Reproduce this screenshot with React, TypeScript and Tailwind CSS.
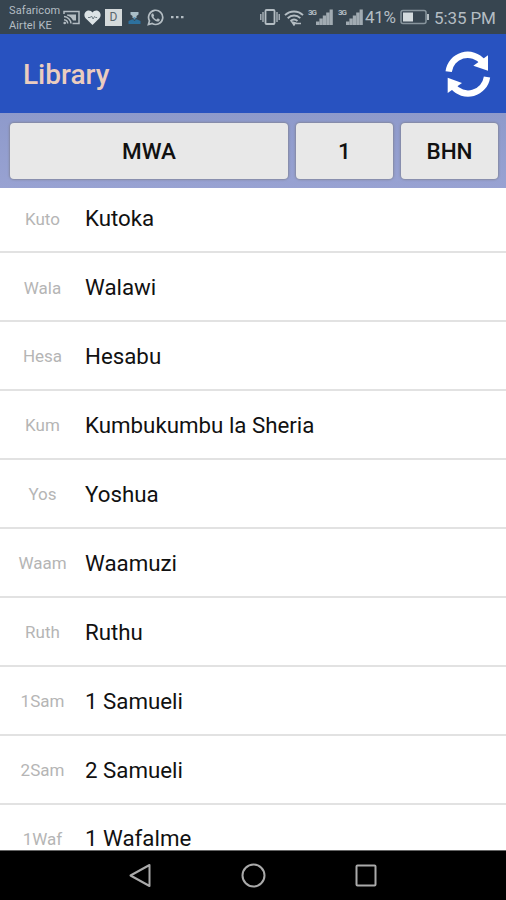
import React from 'react';

interface Book {
  abbr: string;
  name: string;
}

const books: Book[] = [
  { abbr: 'Kuto', name: 'Kutoka' },
  { abbr: 'Wala', name: 'Walawi' },
  { abbr: 'Hesa', name: 'Hesabu' },
  { abbr: 'Kum', name: 'Kumbukumbu la Sheria' },
  { abbr: 'Yos', name: 'Yoshua' },
  { abbr: 'Waam', name: 'Waamuzi' },
  { abbr: 'Ruth', name: 'Ruthu' },
  { abbr: '1Sam', name: '1 Samueli' },
  { abbr: '2Sam', name: '2 Samueli' },
  { abbr: '1Waf', name: '1 Wafalme' },
];

const Signal = () => (
  <div className="flex h-[18px] w-[25px] shrink-0">
    <span className="w-2 text-[8px] leading-[9px] font-bold tracking-[-1px]">3G</span>
    <svg className="h-[18px] w-[17px]" viewBox="0 0 17 18" fill="currentColor">
      <path opacity="0.85" d="M0 17v-3.500h3.200V17zM3.400 17v-6.500h3.200V17zM6.800 17V7.500h3.200V17zM10.200 17V4.500h3.200V17zM13.600 17V1.500h3.200V17z" />
    </svg>
  </div>
);

const StatusBar = () => (
  <div className="flex h-[34px] shrink-0 items-center bg-[#374550] text-[#b4bdc3]">
    <div className="mt-0.5 ml-[9px] w-[54px] text-[11px] leading-[15px] tracking-[0.1px] whitespace-nowrap">
      <p>Safaricom</p>
      <p>Airtel KE</p>
    </div>

    {/* notifications */}
    <svg className="h-[15px] w-[17px]" viewBox="0 0 17 15" fill="none" stroke="currentColor" strokeWidth="1.5">
      <path d="M1 4V1.500h15v12H9.500" />
      <path d="M1 6.500a7.500 7.500 0 0 1 7 7M1 9.700a4 4 0 0 1 3.700 3.800" />
      <path d="M4 4.500h9v6h-3a9 9 0 0 0-6-5z" fill="currentColor" stroke="none" />
      <circle cx="1.700" cy="13" r="1.300" fill="currentColor" stroke="none" />
    </svg>
    <svg className="ml-1 h-[15px] w-[17px]" viewBox="0 0 17 15">
      <path d="M8.500 15 1.600 8.300C-.6 5.900.3 1.900 3.200.8 5.300 0 7.400.8 8.500 2.500 9.600.8 11.700 0 13.800.8c2.900 1.100 3.800 5.100 1.600 7.500z" fill="#dce3e6" />
      <path d="M4 7.500h2.300l1.200-1.500 1.600 3 1.500-2.500 1 1h1.500" fill="none" stroke="#6d7b83" strokeWidth="1" />
    </svg>
    <div className="ml-1 flex h-[17px] w-[17px] items-center justify-center bg-[#d5dadb] text-[12px] leading-none text-[#59666c]">
      D
    </div>
    <svg className="ml-1.5 h-[15px] w-[13px]" viewBox="0 0 13 15">
      <path d="M2.500 2h8v2.500L8.500 6v2h-4V6l-2-1.500z" fill="#a9bec8" />
      <path d="M5.500 7h2v2.500h-2z" fill="#5793b8" />
      <path d="M.5 14v-3l4-1.800L6.500 11l2-1.800 4 1.800v3z" fill="#2d719e" />
    </svg>
    <svg className="ml-[6px] h-[17px] w-[17px]" viewBox="0 0 24 24" fill="currentColor">
      <path d="M17.472 14.382c-.297-.149-1.758-.867-2.030-.967-.273-.099-.471-.148-.67.150-.197.297-.767.966-.940 1.164-.173.199-.347.223-.644.075-.297-.150-1.255-.463-2.390-1.475-.883-.788-1.480-1.761-1.653-2.059-.173-.297-.018-.458.130-.606.134-.133.298-.347.446-.520.149-.174.198-.298.298-.497.099-.198.050-.371-.025-.520-.075-.149-.669-1.612-.916-2.207-.242-.579-.487-.500-.669-.510-.173-.008-.371-.010-.570-.010-.198 0-.520.074-.792.372-.272.297-1.040 1.016-1.040 2.479 0 1.462 1.065 2.875 1.213 3.074.149.198 2.096 3.200 5.077 4.487 2.100.9 2.900.8 3.500.700.900-.1 1.758-.719 2.006-1.413.248-.694.248-1.289.173-1.413-.074-.124-.272-.198-.570-.347z" />
      <path d="M2 22l1.500-5.300A10 10 0 1 1 7.300 20.500z" fill="none" stroke="currentColor" strokeWidth="2.400" />
    </svg>
    <svg className="ml-[6px] h-[4px] w-[15px]" viewBox="0 0 15 4" fill="currentColor">
      <path d="M1 1h2.500v2.200H1zM6 1h2.500v2.200H6zM11 1h2.500v2.200H11z" />
    </svg>

    {/* device state */}
    <svg className="ml-auto h-[18px] w-5" viewBox="0 0 20 18" fill="none" stroke="currentColor">
      <rect x="5.500" y="2" width="9" height="14" rx="1" strokeWidth="1.800" />
      <path d="M3 4v10M.8 6v6M17 4v10M19.200 6v6" strokeWidth="1.300" />
    </svg>
    <svg className="ml-1 h-[17px] w-5" viewBox="0 0 20 17" fill="none" stroke="currentColor" strokeWidth="1.900">
      <path d="M1 6.200c5-5 13-5 18 0M3.700 9.200c3.700-3.600 9-3.600 12.600 0M6.500 12c2.200-2 4.800-2 7 0" />
      <path d="m8 13 2 3 1.500-2zM12 14.500h5" strokeWidth="1.500" />
    </svg>
    <div className="ml-1 flex gap-[5px]">
      <Signal />
      <Signal />
    </div>
    <span className="ml-[2px] w-[33px] text-[17px] leading-5 tracking-[-0.3px]">41%</span>
    <svg className="ml-[2px] h-4 w-[30px]" viewBox="0 0 30 16">
      <rect x="1" y="1.500" width="25" height="13" rx="2" fill="none" stroke="#88959d" strokeWidth="1.500" />
      <rect x="3" y="3.500" width="10" height="9" fill="#d3dadd" />
      <path d="M27 5h2v6h-2z" fill="currentColor" />
    </svg>
    <span className="mt-px mr-[10px] ml-1 w-[62px] text-[17px] leading-5 tracking-[-0.1px] whitespace-nowrap">5:35 PM</span>
  </div>
);

const Header = () => (
  <header className="flex h-[79px] shrink-0 items-center justify-between bg-[#2852c0] pr-[15px] pl-[23px]">
    <h1 className="pt-[3px] text-[28px] font-medium text-[#ebcdbf]">Library</h1>
    <button aria-label="Refresh">
      <svg className="h-[46px] w-[46px]" viewBox="45 46 138 138">
        <path d="M56 108A57.500 57.500 0 0 1 158 79" fill="none" stroke="white" strokeWidth="19" />
        <path d="M174 59v46l-44-15z" fill="white" />
        <path d="M171 124A57.500 57.500 0 0 1 69 152" fill="none" stroke="white" strokeWidth="19" />
        <path d="M53 172v-46l43 16z" fill="white" />
      </svg>
    </button>
  </header>
);

const pickerClass =
  'h-14 rounded-[4px] bg-[#e8e8e8] pt-0.5 text-[22.5px] font-medium text-[#111] shadow-[0_0_2px_1px_rgba(120,122,130,0.6)]';

const Picker = () => (
  <div className="flex h-[75px] shrink-0 items-center gap-2 bg-linear-to-b from-[#8e9acb] to-[#98a2d2] pr-2 pl-[10px]">
    <button className={`${pickerClass} flex-1`}>MWA</button>
    <button className={`${pickerClass} w-[97px]`}>1</button>
    <button className={`${pickerClass} w-[97px]`}>BHN</button>
  </div>
);

const BookList = () => (
  <ul className="-mt-[3.5px] flex flex-col">
    {books.map((book) => (
      <li key={book.abbr} className="flex h-[68.9px] shrink-0 items-center border-b-2 border-[#e2e2e2] bg-white">
        <span className="w-[85px] pt-[3px] text-center text-[17px] text-[#b5b5b5]">{book.abbr}</span>
        <span className="pt-[2.5px] text-[22.3px] text-[#111]">{book.name}</span>
      </li>
    ))}
  </ul>
);

const NavBar = () => (
  <nav className="flex h-[50px] shrink-0 items-center justify-center gap-[87px] border-t border-[#666] bg-black text-[#aaa]">
    <svg className="h-[26px] w-[26px]" viewBox="0 0 26 26" fill="none" stroke="currentColor" strokeWidth="2" strokeLinejoin="round">
      <path d="M22.500 2v21L3.500 12.500z" />
    </svg>
    <svg className="h-[26px] w-[26px]" viewBox="0 0 26 26" fill="none" stroke="currentColor" strokeWidth="2">
      <circle cx="13.500" cy="12.500" r="11" />
    </svg>
    <svg className="h-[26px] w-[26px]" viewBox="0 0 26 26" fill="none" stroke="currentColor" strokeWidth="2">
      <rect x="3.500" y="2.500" width="19" height="20" rx="1" />
    </svg>
  </nav>
);

const App: React.FC = () => {
  return (
    <div className="flex h-screen w-full flex-col overflow-hidden bg-white font-[Roboto,sans-serif]">
      <StatusBar />
      <Header />
      <Picker />
      <main className="min-h-0 flex-1 overflow-hidden">
        <BookList />
      </main>
      <NavBar />
    </div>
  );
};

export default App;
